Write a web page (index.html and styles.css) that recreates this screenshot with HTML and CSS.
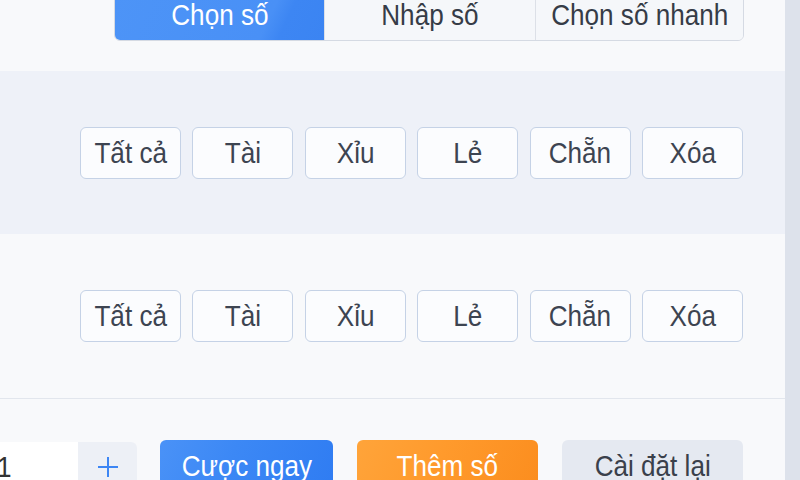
FILE: index.html
```html
<!DOCTYPE html>
<html lang="vi">
<head>
<meta charset="utf-8">
<title>Chọn số</title>
<link rel="stylesheet" href="styles.css">
</head>
<body>
<div class="page">
  <main class="main">
    <div class="tabs">
      <div class="tab-group">
        <div class="tab active"><span class="t">Chọn số</span></div>
        <div class="tab"><span class="t">Nhập số</span></div>
        <div class="tab tab-last"><span class="t">Chọn số nhanh</span></div>
      </div>
    </div>
    <div class="band shade">
      <button class="chip"><span class="t">Tất cả</span></button>
      <button class="chip"><span class="t">Tài</span></button>
      <button class="chip"><span class="t">Xỉu</span></button>
      <button class="chip"><span class="t">Lẻ</span></button>
      <button class="chip"><span class="t">Chẵn</span></button>
      <button class="chip"><span class="t">Xóa</span></button>
    </div>
    <div class="band">
      <button class="chip"><span class="t">Tất cả</span></button>
      <button class="chip"><span class="t">Tài</span></button>
      <button class="chip"><span class="t">Xỉu</span></button>
      <button class="chip"><span class="t">Lẻ</span></button>
      <button class="chip"><span class="t">Chẵn</span></button>
      <button class="chip"><span class="t">Xóa</span></button>
    </div>
    <div class="sep"></div>
    <div class="actions">
      <div class="stepper">
        <div class="qty"><span class="t">1</span></div>
        <div class="plus">
          <svg width="22" height="22" viewBox="0 0 22 22"><path d="M11 1V21M1 11H21" stroke="#3d86f4" stroke-width="2" fill="none"/></svg>
        </div>
      </div>
      <button class="btn btn-blue"><span class="t">Cược ngay</span></button>
      <button class="btn btn-orange"><span class="t">Thêm số</span></button>
      <button class="btn btn-gray"><span class="t">Cài đặt lại</span></button>
    </div>
  </main>
  <aside class="side"></aside>
</div>
</body>
</html>
```
FILE: styles.css
```css
html, body {
  margin: 0;
  padding: 0;
}
body {
  width: 800px;
  height: 480px;
  overflow: hidden;
  background: #f8f9fb;
  font-family: "Liberation Sans", Arial, sans-serif;
  font-size: 30px;
  color: #3b414c;
}
.t {
  display: inline-block;
  white-space: nowrap;
  transform: scaleX(0.87);
}
.page {
  display: flex;
  height: 480px;
}
.main {
  width: 785px;
  display: flex;
  flex-direction: column;
}
.main > * {
  flex-shrink: 0;
}
.side {
  width: 15px;
  background: #dde2eb;
}
.tabs {
  display: flex;
  justify-content: flex-end;
  padding-right: 41px;
  margin-top: -11px;
}
.tab-group {
  display: flex;
  border: 1px solid #d5dae3;
  border-radius: 6px;
  overflow: hidden;
}
.tab {
  width: 210px;
  height: 50px;
  display: flex;
  align-items: center;
  justify-content: center;
  background: #f5f7fa;
  border-left: 1px solid #dce0e7;
  color: #363c47;
}
.tab.tab-last {
  width: 207px;
}
.tab.active {
  width: 209px;
  border-left: none;
  color: #fff;
  background: linear-gradient(115deg, #4d94f7 0%, #4990f6 72%, #3d86f3 80%, #3b84f2 100%);
}
.band {
  height: 164px;
  display: flex;
  align-items: center;
  justify-content: flex-end;
  gap: 11.4px;
  padding-right: 42px;
}
.band.shade {
  margin-top: 30px;
  height: 163px;
  background: #eef1f8;
}
.chip {
  width: 101px;
  height: 52px;
  box-sizing: border-box;
  border: 1px solid #c5d2e6;
  border-radius: 6px;
  background: #fbfcfe;
  font: inherit;
  color: #3d4451;
  padding: 0;
}
.sep {
  height: 1px;
  background: #e2e6ed;
}
.actions {
  display: flex;
  align-items: flex-start;
  padding-top: 41px;
}
.stepper {
  display: flex;
  margin-left: -60px;
  margin-top: 2px;
  height: 50px;
}
.qty {
  width: 138px;
  box-sizing: border-box;
  padding-left: 56px;
  background: #ffffff;
  display: flex;
  align-items: center;
  color: #333;
}
.plus {
  width: 59px;
  background: #edf0f6;
  border-radius: 0 6px 6px 0;
  display: flex;
  align-items: center;
  justify-content: center;
}
.btn {
  height: 52px;
  border: none;
  border-radius: 6px;
  font: inherit;
  padding: 0;
}
.btn-blue {
  margin-left: 23px;
  width: 173px;
  color: #fff;
  background: linear-gradient(115deg, #4a92f7 0%, #3c88f5 40%, #2f7cf2 100%);
}
.btn-orange {
  margin-left: 24px;
  width: 181px;
  color: #fff;
  background: linear-gradient(115deg, #ffa43a 0%, #ff9a2c 45%, #fb8d1e 100%);
}
.btn-gray {
  margin-left: 24px;
  width: 181px;
  color: #3a404b;
  background: #e5e9f1;
}
```
